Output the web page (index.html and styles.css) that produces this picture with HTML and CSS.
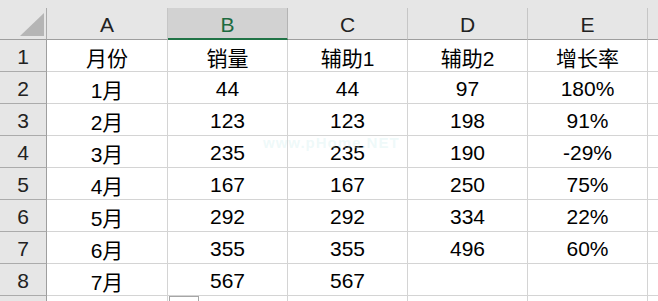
FILE: index.html
```html
<!DOCTYPE html>
<html lang="zh">
<head>
<meta charset="utf-8">
<link rel="stylesheet" href="styles.css">
</head>
<body>
<div class="sheet">
  <div class="strip"></div>
  <div class="grid">
    <div class="corner"><span class="tri"></span></div>
    <div class="ch">A</div>
    <div class="ch sel">B</div>
    <div class="ch">C</div>
    <div class="ch">D</div>
    <div class="ch">E</div>
    <div class="ch last"></div>

    <div class="rh">1</div><div class="c">月份</div><div class="c">销量</div><div class="c">辅助1</div><div class="c">辅助2</div><div class="c">增长率</div><div class="c last"></div>
    <div class="rh">2</div><div class="c">1月</div><div class="c">44</div><div class="c">44</div><div class="c">97</div><div class="c">180%</div><div class="c last"></div>
    <div class="rh">3</div><div class="c">2月</div><div class="c">123</div><div class="c">123</div><div class="c">198</div><div class="c">91%</div><div class="c last"></div>
    <div class="rh">4</div><div class="c">3月</div><div class="c">235</div><div class="c">235</div><div class="c">190</div><div class="c">-29%</div><div class="c last"></div>
    <div class="rh">5</div><div class="c">4月</div><div class="c">167</div><div class="c">167</div><div class="c">250</div><div class="c">75%</div><div class="c last"></div>
    <div class="rh">6</div><div class="c">5月</div><div class="c">292</div><div class="c">292</div><div class="c">334</div><div class="c">22%</div><div class="c last"></div>
    <div class="rh">7</div><div class="c">6月</div><div class="c">355</div><div class="c">355</div><div class="c">496</div><div class="c">60%</div><div class="c last"></div>
    <div class="rh">8</div><div class="c">7月</div><div class="c">567</div><div class="c">567</div><div class="c"></div><div class="c"></div><div class="c last"></div>
    <div class="rh"></div><div class="c"></div><div class="c"></div><div class="c"></div><div class="c"></div><div class="c"></div><div class="c last"></div>
  </div>
  <div class="watermark">www.pHome.NET</div>
  <div class="paste-box"></div>
</div>
</body>
</html>
```

FILE: styles.css
```css
html, body {
  margin: 0;
  padding: 0;
  background: #ffffff;
  overflow: hidden;
}
.sheet {
  position: relative;
  width: 658px;
  height: 301px;
  overflow: hidden;
  font-family: "Liberation Sans", "Noto Sans CJK SC", sans-serif;
  font-size: 21px;
  color: #000;
}
.strip {
  height: 8px;
  background: #e6e6e6;
}
.grid {
  display: grid;
  grid-template-columns: 47px 121px 120px 120px 120px 120px 1fr;
  grid-template-rows: 32px repeat(9, 32px);
}
.grid > div {
  box-sizing: border-box;
  display: flex;
  align-items: center;
  justify-content: center;
  padding-top: 3px;
  white-space: nowrap;
}
.corner {
  position: relative;
  background: #e6e6e6;
  border-right: 1px solid #ababab;
  border-bottom: 1px solid #9e9e9e;
}
.tri {
  position: absolute;
  right: 2px;
  bottom: 3px;
  width: 0;
  height: 0;
  border-left: 24px solid transparent;
  border-bottom: 23px solid #b5b5b5;
}
.ch {
  background: #e6e6e6;
  border-right: 1px solid #c6c6c6;
  border-bottom: 1px solid #9e9e9e;
  color: #222;
}
.ch.sel {
  background: #d2d2d2;
  color: #1d6a3f;
  border-bottom: 2px solid #217346;
  border-right: 1px solid #b4b4b4;
}
.ch.last {
  border-right: none;
}
.rh {
  background: #e6e6e6;
  border-right: 1px solid #9e9e9e;
  border-bottom: 1px solid #ababab;
  color: #222;
}
.c {
  border-right: 1px solid #d4d4d4;
  border-bottom: 1px solid #d4d4d4;
}
.c.last {
  border-right: none;
}
.watermark {
  position: absolute;
  left: 263px;
  top: 134px;
  font-size: 15px;
  font-weight: bold;
  color: rgba(200, 236, 236, 0.3);
  letter-spacing: 1px;
  pointer-events: none;
}
.paste-box {
  position: absolute;
  left: 169px;
  top: 296px;
  width: 28px;
  height: 10px;
  border: 1px solid #a6a6a6;
  background: #fff;
}
```
